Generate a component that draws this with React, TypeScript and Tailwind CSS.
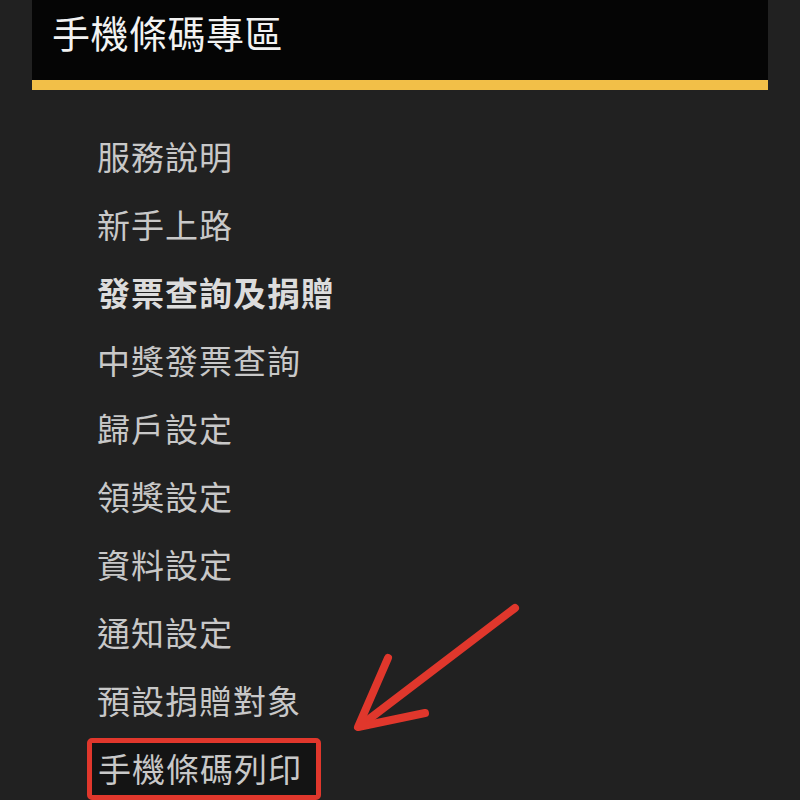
const items = [
  { label: "服務說明" },
  { label: "新手上路" },
  { label: "發票查詢及捐贈", bold: true },
  { label: "中獎發票查詢" },
  { label: "歸戶設定" },
  { label: "領獎設定" },
  { label: "資料設定" },
  { label: "通知設定" },
  { label: "預設捐贈對象" },
];

export default function App() {
  return (
    <div
      className="relative w-[800px] h-[800px] overflow-hidden bg-[#212121]"
      style={{ fontFamily: '"Noto Sans CJK TC", "Noto Sans", sans-serif' }}
    >
      <div className="mx-[32px] h-[90px] bg-[#050505] border-b-[10px] border-[#f2bf48]">
        <h1 className="pl-[20px] pt-[10px] text-[38px] leading-[44px] text-[#f2f2f2] font-normal tracking-[0.5px]">
          手機條碼專區
        </h1>
      </div>

      <ul className="pl-[97px] pt-[33px]">
        {items.map((item) => (
          <li
            key={item.label}
            className={`h-[68px] flex items-center text-[33px] tracking-[1px] ${
              item.bold ? "font-bold text-[#dcdcdc]" : "text-[#c8c8c8]"
            }`}
          >
            {item.label}
          </li>
        ))}
        <li className="h-[68px] flex items-center text-[33px] tracking-[1px] text-[#c8c8c8]">
          <span className="-ml-[10px] h-[62px] flex items-center pl-[6px] pr-[14px] border-[5px] border-[#e0372c] rounded-[5px] bg-[#141414]">
            手機條碼列印
          </span>
        </li>
      </ul>

      {/* hand-drawn arrow */}
      <svg className="absolute left-0 top-0" width="800" height="800">
        <g stroke="#e0372c" strokeWidth="8" strokeLinecap="round" strokeLinejoin="round" fill="none">
          <path d="M515 608 L360 726" />
          <path d="M388 658 L358 727 L425 713" />
        </g>
      </svg>
    </div>
  );
}
